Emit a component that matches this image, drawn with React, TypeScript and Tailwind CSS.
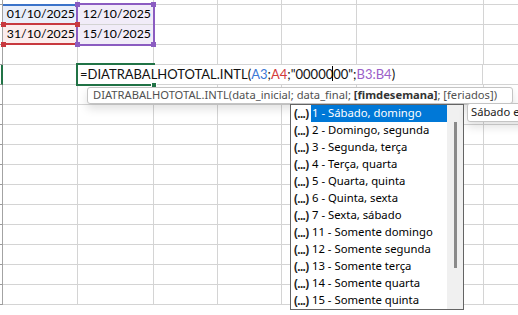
const COLS = [75, 76, 64, 64, 75, 127, 140];
const ROWS = 16;

const items = [
  "1 - Sábado, domingo",
  "2 - Domingo, segunda",
  "3 - Segunda, terça",
  "4 - Terça, quarta",
  "5 - Quarta, quinta",
  "6 - Quinta, sexta",
  "7 - Sexta, sábado",
  "11 - Somente domingo",
  "12 - Somente segunda",
  "13 - Somente terça",
  "14 - Somente quarta",
  "15 - Somente quinta",
];

function Cell({ w, children, className = "" }: { w: number; children?: React.ReactNode; className?: string }) {
  return (
    <div
      className={`h-5 shrink-0 border-r border-b border-[#d4d4d4] flex items-center justify-end pr-[2px] ${className}`}
      style={{ width: w }}
    >
      {children}
    </div>
  );
}

function Header({ active = false, h = 20 }: { active?: boolean; h?: number }) {
  return (
    <div
      className={`w-[3px] shrink-0 border-b border-b-[#9a9a9a] ${active ? "border-r-2 border-r-[#217346]" : "border-r border-r-[#a3a3a3]"}`}
      style={{ height: h }}
    />
  );
}

function GridRow({ i }: { i: number }) {
  if (i === 0) {
    return (
      <div className="flex">
        <Header h={5} />
        {COLS.map((w, c) => (
          <div key={c} className="h-[5px] shrink-0 border-r border-b border-[#d4d4d4]" style={{ width: w }} />
        ))}
      </div>
    );
  }
  if (i === 1 || i === 2) {
    const a = i === 1 ? "01/10/2025" : "31/10/2025";
    const b = i === 1 ? "12/10/2025" : "15/10/2025";
    return (
      <div className="flex text-[12.3px]">
        <Header />
        <Cell w={COLS[0]} className={i === 1 ? "bg-[#e9eef9]" : "bg-[#fbeded]"}>{a}</Cell>
        <Cell w={COLS[1]} className="bg-[#f1ecf8]">{b}</Cell>
        {COLS.slice(2).map((w, c) => <Cell key={c} w={w} />)}
      </div>
    );
  }
  if (i === 4) {
    return (
      <div className="flex">
        <Header active />
        <Cell w={COLS[0] - 1} />
        <div
          className="h-5 shrink-0 border-r border-b border-[#d4d4d4] flex items-center pl-[3px] whitespace-nowrap text-[#111]"
          style={{ width: COLS[1] + COLS[2] + COLS[3] + COLS[4] + COLS[5] }}
        >
          <span>=DIATRABALHOTOTAL.INTL(</span>
          <span className="text-[#3b78d6]">A3</span>
          <span>;</span>
          <span className="text-[#d23b3b]">A4</span>
          <span>;"0000000";</span>
          <span className="text-[#9b5ec9]">B3:B4</span>
          <span>)</span>
        </div>
        <Cell w={COLS[6]} />
      </div>
    );
  }
  return (
    <div className="flex">
      <Header />
      {COLS.map((w, c) => <Cell key={c} w={w} />)}
    </div>
  );
}

function Handle({ x, y, color }: { x: number; y: number; color: string }) {
  return <div className={`absolute w-[5px] h-[5px] ${color}`} style={{ left: x - 2, top: y - 2 }} />;
}

export default function App() {
  return (
    <div className="relative w-[518px] h-[315px] overflow-hidden bg-white text-[13px] text-black font-['Lato',sans-serif]">
      {Array.from({ length: ROWS }).map((_, i) => <GridRow key={i} i={i} />)}

      {/* range references */}
      <div className="absolute left-[3px] top-[4px] w-[75px] h-[21px] border-t-2 border-[#3b73c9]" />
      <div className="absolute left-[3px] top-[23px] w-[75px] h-[22px] border-y-2 border-[#c8393f]" />
      <div className="absolute left-[76px] top-[3px] w-[79px] h-[43px] border-2 border-[#8b5cc1]" />
      <Handle x={3} y={24} color="bg-[#c8393f]" />
      <Handle x={3} y={44} color="bg-[#c8393f]" />
      <Handle x={77} y={24} color="bg-[#c8393f]" />
      <Handle x={77} y={4} color="bg-[#8b5cc1]" />
      <Handle x={153} y={4} color="bg-[#8b5cc1]" />
      <Handle x={77} y={44} color="bg-[#8b5cc1]" />
      <Handle x={153} y={44} color="bg-[#8b5cc1]" />

      {/* active cell */}
      <div className="absolute left-[76px] top-[63px] w-[79px] h-[23px] border-2 border-r-0 border-[#217346]" />
      <div className="absolute left-[151px] top-[82px] w-[6px] h-[6px] bg-[#217346] border border-white" />
      <div className="absolute left-[332px] top-[66px] w-px h-[15px] bg-black" />

      {/* function tooltip */}
      <div className="absolute left-[87px] top-[87px] w-[426px] h-[17px] bg-white border border-[#c4c4c4] rounded-[3px] shadow-[0_5px_10px_rgba(0,0,0,0.12)] flex items-center pl-[5px] whitespace-pre text-[11.2px] text-[#505050] font-['Noto_Sans',sans-serif]">
        <span>DIATRABALHOTOTAL.INTL(data_inicial; data_final; </span>
        <span className="font-bold text-[#333]">[fimdesemana]</span>
        <span>; [feriados])</span>
      </div>

      {/* dropdown list */}
      <div className="absolute left-[290px] top-[104px] w-[174px] h-[206px] bg-white border border-[#646464] flex font-['Noto_Sans',sans-serif] text-[11.3px]">
        <div className="flex-1 flex flex-col">
          {items.map((t, i) => (
            <div key={t} className="h-[17px] flex items-center">
              <span className="w-[20px] pl-[3px] shrink-0 font-bold text-[#222] text-[11.5px] tracking-[-0.6px]">(...)</span>
              <span className={`flex-1 h-full flex items-center pl-[1px] whitespace-nowrap ${i === 0 ? "bg-[#0078d7] text-white" : "text-black"}`}>{t}</span>
            </div>
          ))}
        </div>
        <div className="w-[16px] bg-[#f0f0f0] flex justify-center pt-[17px]">
          <div className="w-[3px] h-[146px] bg-[#8a8a8a]" />
        </div>
      </div>

      {/* item tooltip */}
      <div className="absolute left-[467px] top-[103px] h-[19px] pl-[3px] pr-2 bg-white border border-[#c4c4c4] rounded-[3px] shadow-[0_5px_10px_rgba(0,0,0,0.12)] flex items-center whitespace-nowrap text-[11.2px] text-[#222] font-['Noto_Sans',sans-serif]">
        Sábado e domingo
      </div>
    </div>
  );
}
